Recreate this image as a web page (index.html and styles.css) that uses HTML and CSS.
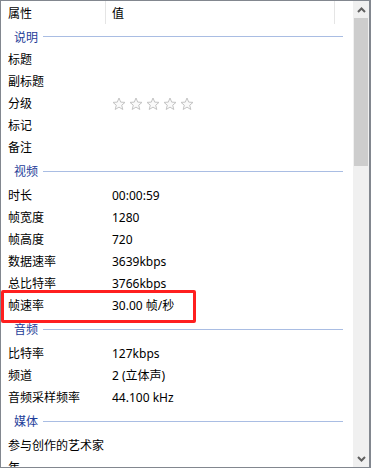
FILE: index.html
```html
<!DOCTYPE html>
<html lang="zh-CN">
<head>
  <meta charset="UTF-8">
  <title>属性 - 详细信息</title>
  <link rel="stylesheet" href="styles.css">
</head>
<body>
  <div class="frame">
    <div class="list">
      <div class="head">
        <div class="head-cell name">属性</div>
        <div class="head-cell value">值</div>
        <div class="head-cell rest"></div>
      </div>

      <div class="group first"><span>说明</span><i></i></div>
      <div class="row"><span class="k">标题</span><span class="v"></span></div>
      <div class="row"><span class="k">副标题</span><span class="v"></span></div>
      <div class="row"><span class="k">分级</span>
        <span class="v stars">
          <svg width="84" height="14" viewBox="0 0 84 14">
            <defs>
              <path id="star" d="M7 1 L8.7 5.1 L13 5.4 L9.7 8.2 L10.8 12.5 L7 10.1 L3.2 12.5 L4.3 8.2 L1 5.4 L5.3 5.1 Z" fill="#fafafa" stroke="#c4c4c4" stroke-width="1"/>
            </defs>
            <use href="#star" x="0"/>
            <use href="#star" x="17"/>
            <use href="#star" x="34"/>
            <use href="#star" x="51"/>
            <use href="#star" x="68"/>
          </svg>
        </span>
      </div>
      <div class="row"><span class="k">标记</span><span class="v"></span></div>
      <div class="row"><span class="k">备注</span><span class="v"></span></div>

      <div class="group"><span>视频</span><i></i></div>
      <div class="row"><span class="k">时长</span><span class="v">00:00:59</span></div>
      <div class="row"><span class="k">帧宽度</span><span class="v">1280</span></div>
      <div class="row"><span class="k">帧高度</span><span class="v">720</span></div>
      <div class="row"><span class="k">数据速率</span><span class="v">3639kbps</span></div>
      <div class="row"><span class="k">总比特率</span><span class="v">3766kbps</span></div>
      <div class="row"><span class="k">帧速率</span><span class="v">30.00 帧/秒</span></div>

      <div class="group"><span>音频</span><i></i></div>
      <div class="row"><span class="k">比特率</span><span class="v">127kbps</span></div>
      <div class="row"><span class="k">频道</span><span class="v">2 (立体声)</span></div>
      <div class="row"><span class="k">音频采样频率</span><span class="v">44.100 kHz</span></div>

      <div class="group"><span>媒体</span><i></i></div>
      <div class="row"><span class="k">参与创作的艺术家</span><span class="v"></span></div>
      <div class="row"><span class="k">年</span><span class="v"></span></div>
    </div>

    <div class="scrollbar">
      <div class="arrow">
        <svg width="9" height="6" viewBox="0 0 9 6"><path d="M1 5 L4.5 1.5 L8 5" fill="none" stroke="#606060" stroke-width="2"/></svg>
      </div>
      <div class="thumb"></div>
      <div class="track"></div>
      <div class="arrow">
        <svg width="9" height="6" viewBox="0 0 9 6"><path d="M1 1 L4.5 4.5 L8 1" fill="none" stroke="#606060" stroke-width="2"/></svg>
      </div>
    </div>

    <div class="mark"></div>
  </div>
</body>
</html>
```

FILE: styles.css
```css
html, body { margin: 0; padding: 0; background: #ffffff; }
body { font-family: "Noto Sans", "Noto Sans CJK SC", sans-serif; font-size: 12px; color: #000000; }

.frame { position: relative; width: 371px; height: 468px; box-sizing: border-box; border: 1px solid #82878f; border-right-width: 2px; display: flex; background: #ffffff; overflow: hidden; }
.list { flex: 1; overflow: hidden; }

.head { display: flex; height: 24px; }
.head-cell { display: flex; align-items: center; box-sizing: border-box; border-right: 1px solid #e5e5e5; margin-bottom: 1px; }
.head-cell.name { width: 105px; padding-left: 7px; }
.head-cell.value { width: 229px; padding-left: 6px; }
.head-cell.rest { flex: 1; border-right: none; }

.group { display: flex; align-items: center; height: 26px; padding-left: 13px; color: #1e3d99; }
.group.first { height: 23px; }
.group span { margin-right: 5px; }
.group i { display: block; width: 300px; height: 1px; background: #a9bde3; }

.row { display: flex; align-items: center; height: 22px; }
.k { width: 104px; padding-left: 7px; white-space: nowrap; }
.v { white-space: nowrap; }
.stars { display: flex; align-items: center; margin-top: 1px; }
.stars svg { display: block; }

.scrollbar { width: 16px; display: flex; flex-direction: column; background: #f0f0f0; }
.arrow { height: 17px; display: flex; align-items: center; justify-content: center; }
.thumb { height: 148px; margin: 0 1px; background: #cdcdcd; }
.track { flex: 1; }

.mark { position: absolute; left: 0; top: 289px; width: 195px; height: 33px; box-sizing: border-box; border: 3px solid #ff1f1f; border-radius: 2px; }
```
